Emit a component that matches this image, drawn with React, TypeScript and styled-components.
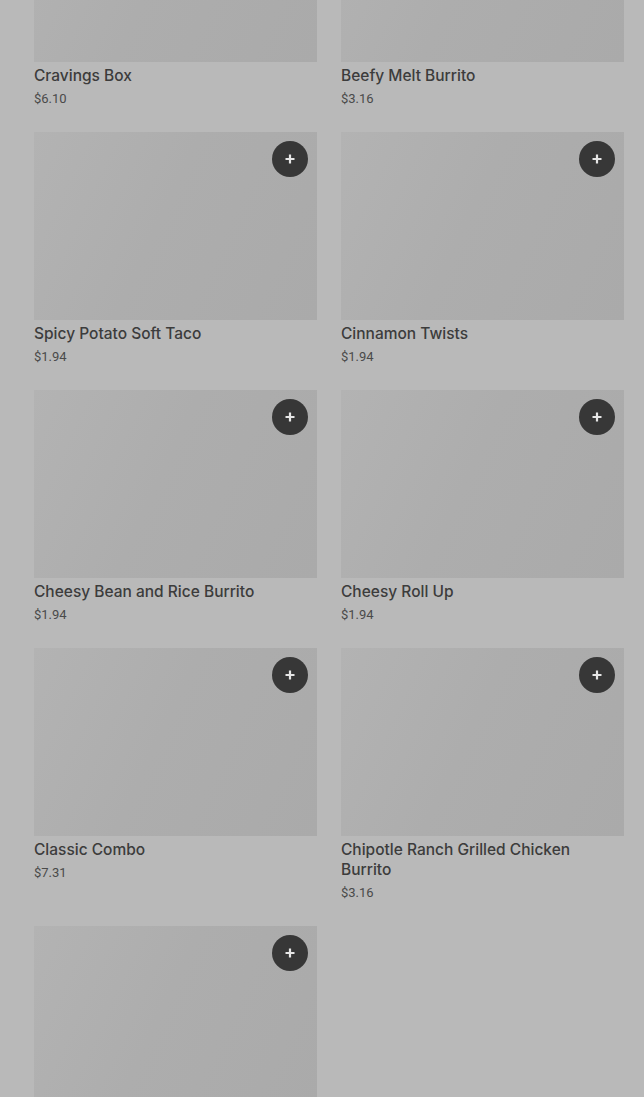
import React from "react";
import styled, { createGlobalStyle } from "styled-components";

const GlobalStyle = createGlobalStyle`
  html, body {
    margin: 0;
    padding: 0;
    background: #b9b9b9;
    overflow: hidden;
  }
  * {
    box-sizing: border-box;
  }
`;

const items = [
  { name: "Cravings Box", price: "$6.10" },
  { name: "Beefy Melt Burrito", price: "$3.16" },
  { name: "Spicy Potato Soft Taco", price: "$1.94" },
  { name: "Cinnamon Twists", price: "$1.94" },
  { name: "Cheesy Bean and Rice Burrito", price: "$1.94" },
  { name: "Cheesy Roll Up", price: "$1.94" },
  { name: "Classic Combo", price: "$7.31" },
  { name: "Chipotle Ranch Grilled Chicken Burrito", price: "$3.16" },
  { name: "Chicken Quesadilla", price: "$5.29" },
];

const PlusIcon = () => (
  <svg width="12" height="12" viewBox="0 0 12 12">
    <path d="M6 1.5v9M1.5 6h9" stroke="#e6e6e6" strokeWidth="2.2" />
  </svg>
);

export default function App() {
  return (
    <>
      <GlobalStyle />
      <Page>
        <Grid>
          {items.map((item) => (
            <Card key={item.name}>
              <Thumb>
                <AddButton type="button" aria-label={`Add ${item.name}`}>
                  <PlusIcon />
                </AddButton>
              </Thumb>
              <Name>{item.name}</Name>
              <Price>{item.price}</Price>
            </Card>
          ))}
        </Grid>
      </Page>
    </>
  );
}

const Page = styled.div`
  width: 644px;
  height: 1097px;
  overflow: hidden;
  background: #b9b9b9;
`;

const Grid = styled.div`
  display: grid;
  grid-template-columns: 283px 283px;
  column-gap: 24px;
  row-gap: 23px;
  padding: 0 20px 0 34px;
  margin-top: -126px;
  align-items: start;
`;

const Card = styled.div`
  display: flex;
  flex-direction: column;
`;

const Thumb = styled.div`
  position: relative;
  width: 283px;
  height: 188px;
  background: linear-gradient(115deg, #b3b3b3 0%, #adadad 45%, #aaaaaa 100%);
`;

const AddButton = styled.button`
  position: absolute;
  top: 9px;
  right: 9px;
  width: 36px;
  height: 36px;
  border-radius: 50%;
  border: none;
  padding: 0;
  background: #373737;
  display: flex;
  align-items: center;
  justify-content: center;
  cursor: pointer;
`;

const Name = styled.div`
  margin-top: 4px;
  font-family: Inter, "Liberation Sans", sans-serif;
  font-weight: 500;
  font-size: 15.5px;
  line-height: 20px;
  color: #3c3c3c;
`;

const Price = styled.div`
  margin-top: 3px;
  font-family: Roboto, "Liberation Sans", sans-serif;
  font-size: 13px;
  line-height: 20px;
  color: #4a4a4a;
`;
